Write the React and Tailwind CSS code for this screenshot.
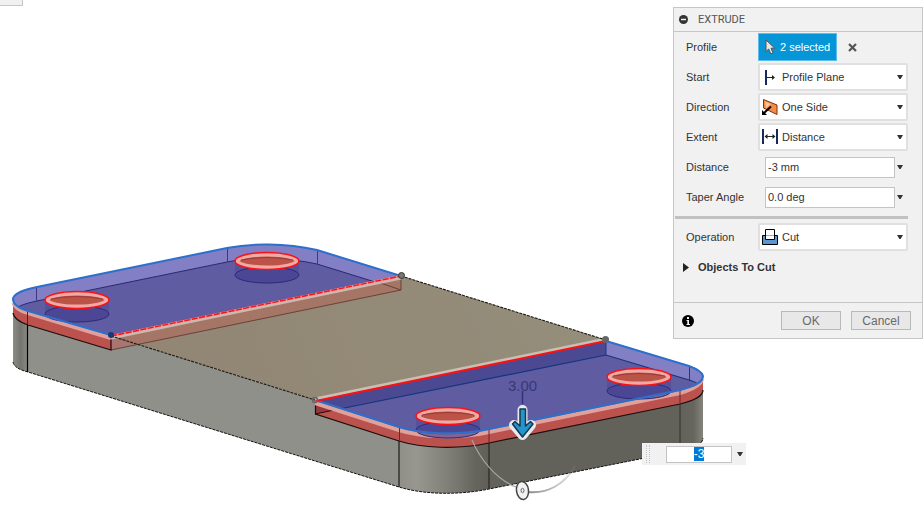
import { useEffect, useRef } from "react";

const LEFT_TOP =
  "M111 336 L28 311 C18 308 13 304 13 299 C14 293 23 290 37 287 L227 248 C251 243 285 243 317 250 L401 276 Z";
const LEFT_FLOOR =
  "M28 320 L13 313 C14 307 23 304 37 301 L227 262 C251 257 285 257 317 264 L401 290 L111 350 Z";
const RIGHT_TOP =
  "M315 400 L399 427 C421 434 457 436 489 429 L680 390 C696 386 703 382 703 376 C702 372 697 369 689 366 L606 341 Z";

function Hole({ cx, cy }) {
  return (
    <g>
      <path
        d={`M${cx - 32} ${cy} V${cy + 14} A32 8 0 0 0 ${cx + 32} ${cy + 14} V${cy} Z`}
        fill="#4a3f92"
        fillOpacity="0.4"
      />
      <ellipse cx={cx} cy={cy + 14} rx="32" ry="8" fill="#33348c" fillOpacity="0.3" stroke="#2c2a78" strokeWidth="1" />
      <ellipse cx={cx} cy={cy} rx="29.5" ry="6.500" fill="#bb5346" stroke="#f0a9a4" strokeWidth="4" />
      <path d={`M${cx - 26} ${cy - 1} Q${cx} ${cy - 6} ${cx + 26} ${cy - 1}`} fill="none" stroke="#9c3a34" strokeWidth="1" />
      <ellipse cx={cx} cy={cy} rx="32" ry="8.5" fill="none" stroke="#fb1014" strokeWidth="1.5" />
    </g>
  );
}

function Scene() {
  return (
    <svg
      viewBox="0 0 924 514"
      preserveAspectRatio="xMinYMin meet"
      className="absolute inset-0 h-full w-full"
      role="img"
      aria-label="Plate model with extrude preview"
    >
      <defs>
        <clipPath id="leftClip"><path d={LEFT_TOP} /></clipPath>
        <clipPath id="rightClip"><path d={RIGHT_TOP} /></clipPath>
        <linearGradient id="cornerLeft" x1="0" x2="1" y1="0" y2="0">
          <stop offset="0" stopColor="#8d8d86" />
          <stop offset="0.5" stopColor="#74756e" />
          <stop offset="1" stopColor="#8b8c85" />
        </linearGradient>
        <linearGradient id="cornerFront" x1="0" x2="1" y1="0" y2="0">
          <stop offset="0" stopColor="#8f8f88" />
          <stop offset="0.2" stopColor="#98978f" />
          <stop offset="0.55" stopColor="#7f7f77" />
          <stop offset="0.85" stopColor="#65655d" />
          <stop offset="1" stopColor="#606058" />
        </linearGradient>
        <linearGradient id="cornerRight" x1="0" x2="1" y1="0" y2="0">
          <stop offset="0" stopColor="#62625a" />
          <stop offset="0.6" stopColor="#66665e" />
          <stop offset="1" stopColor="#85857e" />
        </linearGradient>
        <linearGradient id="tan" x1="0" x2="1" y1="0.5" y2="0.4">
          <stop offset="0" stopColor="#928573" />
          <stop offset="1" stopColor="#948e7b" />
        </linearGradient>
        <linearGradient id="dialFade" x1="0" x2="1" y1="0" y2="0">
          <stop offset="0" stopColor="#8c8c8c" />
          <stop offset="1" stopColor="#8c8c8c" stopOpacity="0.2" />
        </linearGradient>
      </defs>

      {/* side faces */}
      <path d="M13 300 V362 C14 367 20 370 28 372 V311 Z" fill="url(#cornerLeft)" />
      <path d="M28 311 L111 336 L315 400 L399 427 V487 L28 372 Z" fill="#8e9089" />
      <path d="M399 427 C421 434 457 436 489 429 V489 C460 495 425 495 399 487 Z" fill="url(#cornerFront)" />
      <path d="M489 429 L680 390 V451 L489 489 Z" fill="#62625a" />
      <path d="M680 390 C696 386 703 382 703 376 V440 C702 445 694 449 680 451 Z" fill="url(#cornerRight)" />
      <path
        d="M13 362 C14 367 20 370 28 372 L399 487 C425 495 460 495 489 489 L680 451 C694 448 702 445 703 438"
        fill="none" stroke="#111" strokeWidth="1" strokeDasharray="3 1"
      />
      <path d="M27.5 322 V372" stroke="#000" strokeWidth="1.2" />
      <path d="M399 441 V487 M489 442 V489" stroke="#33332f" strokeWidth="1.5" />
      <path d="M680 404 V451" stroke="#33332f" strokeWidth="1" />

      {/* untouched centre of the top face */}
      <path d="M111 336 L401 276 L606 340 L315 400 Z" fill="url(#tan)" />

      {/* left pocket */}
      <path d="M111 336 L401 276 V290 L111 350 Z" fill="#a57565" />
      <path d="M111 337 L133 343 L133 345 L111 350 Z" fill="#a87672" />
      <path d="M111 350 L401 290 V276" fill="none" stroke="#6b4138" strokeWidth="1" />
      <path d="M360 276 L401 290" stroke="#6b4138" strokeWidth="1" />
      <path d="M13 300 V315 C14 319 20 322 28 325 L111 350 V336 L28 311 Z" fill="#bb524e" />
      <path d="M13 313 C14 319 20 322 28 325 L111 350 V336" fill="none" stroke="#1d0d0c" strokeWidth="1.2" />
      <path d={LEFT_TOP} fill="#827fc5" />
      <g clipPath="url(#leftClip)">
        <path d={LEFT_FLOOR} fill="#5f5ca1" stroke="#2b2873" strokeWidth="1" />
      </g>
      <path d="M36.5 287 V301 M227.5 248 V262 M317.5 250 V264" stroke="#3c3983" strokeWidth="1" />
      <path d="M13.500 303 C15 308 20 311 28 313 L111 338" fill="none" stroke="#e0a19d" strokeWidth="4" />
      <path d="M27.5 311 V324" stroke="#5c1d1d" strokeWidth="1" />
      <Hole cx={77} cy={300} />
      <Hole cx={267} cy={261} />
      <path
        d="M111 335 L28 311 C18 308 13 304 13 299 C14 293 23 290 37 287 L227 248 C251 243 285 243 317 250 L401 276"
        fill="none" stroke="#2d6fcb" strokeWidth="2"
      />
      <path d="M111 338 L401 278" stroke="#ccb8b0" strokeWidth="3" />
      <path d="M111 336 L401 276" stroke="#ff8d8d" strokeWidth="2" />
      <path d="M111 336 L401 276" stroke="#fb1014" strokeWidth="1.4" strokeDasharray="6 1.5" />

      {/* right pocket */}
      <path d="M315 400 V414 L399 441 C421 448 457 450 489 443 L680 404 C696 400 703 396 703 390 V376 L680 388 L489 427 L399 425 Z" fill="#bb524e" />
      <path d="M315 402 L339 409 L315 414 Z" fill="#96393b" />
      <path d="M315.500 402 V414 L399 441 C421 448 457 450 489 443 L680 404 C696 400 703 396 703 390" fill="none" stroke="#1d0d0c" strokeWidth="1.2" />
      <path d="M315 414 L339 409" stroke="#1d0d0c" strokeWidth="1" />
      <path d="M315 403 L399 430 C421 437 457 439 489 432 L680 393 C694 389 701 385 702 379" fill="none" stroke="#e0a19d" strokeWidth="4" />
      <path d={RIGHT_TOP} fill="#827fc5" />
      <g clipPath="url(#rightClip)">
        <path d="M315 400 L606 340 V356 L315 414 Z" fill="#4b4991" />
        <path d="M315 414 L606 355 L689 380 C698 383 703 387 703 392 L480 450 L399 441 Z" fill="#5f5ca1" />
        <path d="M315 414 L606 355 L689 380 C698 383 701 385 703 389" fill="none" stroke="#14357e" strokeWidth="1.2" />
      </g>
      <path d="M606 341 V355 M689.500 367 V381" stroke="#1d3a8a" strokeWidth="1" />
      <path d="M399.500 427 V441 M489 429 V443 M680 390 V404" stroke="#6a2726" strokeWidth="1" />
      <Hole cx={448} cy={416} />
      <Hole cx={639} cy={377} />
      <path
        d="M315 400 L399 427 C421 434 457 436 489 429 L680 390 C696 386 703 382 703 376 C702 372 697 369 689 366 L606 341"
        fill="none" stroke="#2d6fcb" strokeWidth="2"
      />
      <path d="M315 399 L606 339" stroke="#c9bfb4" strokeWidth="3" />
      <path d="M316 401 L606 341" stroke="#fb1014" strokeWidth="2" />

      {/* edges across the centre */}
      <path d="M111 336 L315 400 M401 276 L606 340" stroke="#1b1812" strokeWidth="1.1" strokeDasharray="3 1" />
      <circle cx="111" cy="335" r="3" fill="#123a7c" />
      <circle cx="401.500" cy="275.500" r="3" fill="#77776f" stroke="#333" strokeWidth="1" />
      <circle cx="605.500" cy="339.500" r="3.500" fill="#666" />
      <circle cx="315" cy="400" r="2.500" fill="none" stroke="#666" strokeWidth="1.500" />

      {/* distance manipulator */}
      <text x="508" y="391" fontSize="15" fill="#3b3776" className="font-['Liberation_Sans',Arial,sans-serif]">3.00</text>
      <path d="M522.500 391 V404" stroke="#35317a" strokeWidth="1.500" />
      <path
        d="M522.500 410 V435 M514 425 L522.500 435 L531 425"
        fill="none" stroke="#e8eaf2" strokeWidth="10" strokeLinejoin="round" strokeLinecap="round"
      />
      <path
        d="M520 409 H525.500 V426 L530.500 421.500 L533 424 L522.500 437 L512.500 424 L515 421.500 L520 426 Z"
        fill="#2494cf" stroke="#173748" strokeWidth="1.500" strokeLinejoin="round"
      />
      <path d="M472 440 C479 457 495 479 516 487" fill="none" stroke="#a3a3a3" strokeWidth="1.200" />
      <path d="M528 492 C548 494 565 484 575 466" fill="none" stroke="url(#dialFade)" strokeWidth="2" />
      <ellipse cx="522.500" cy="490.500" rx="6" ry="9" transform="rotate(-8 522.5 490.5)" fill="#f2f2f2" stroke="#444" strokeWidth="1.500" />
      <ellipse cx="522.500" cy="490.500" rx="1.500" ry="2.200" fill="none" stroke="#666" strokeWidth="1" />
    </svg>
  );
}

function Caret() {
  return (
    <svg viewBox="0 0 6 4" className="pointer-events-none h-1 w-1.5 shrink-0" aria-hidden="true">
      <path d="M0 0 H6 L3.600 4 H2.400 Z" fill="#333" />
    </svg>
  );
}

function StartIcon() {
  return (
    <svg viewBox="0 0 16 16" className="h-4 w-4" aria-hidden="true">
      <path d="M4 1 V16" stroke="#15295a" strokeWidth="2" />
      <path d="M5 8.500 H12" stroke="#222" strokeWidth="1" />
      <path d="M10 6 L13 8.500 L10 11 Z" fill="#222" />
    </svg>
  );
}

function DirectionIcon() {
  return (
    <svg viewBox="0 0 16 16" className="h-4 w-4" aria-hidden="true">
      <path d="M1.500 0.500 L15 6 V15.500 L1.500 9 Z" fill="#f58b45" stroke="#7b3512" strokeWidth="1" />
      <path d="M3 2.500 L9 5 L4 9 Z" fill="#fbc39a" />
      <path d="M2 14 L9 7.500" stroke="#000" strokeWidth="2" />
      <path d="M0 16 V11 L5 16 Z" fill="#000" />
    </svg>
  );
}

function ExtentIcon() {
  return (
    <svg viewBox="0 0 16 16" className="h-4 w-4" aria-hidden="true">
      <path d="M1 0 V15 M15 0 V15" stroke="#15295a" strokeWidth="2" />
      <path d="M3 7.500 H13" stroke="#222" strokeWidth="1" />
      <path d="M5.500 5 L2.500 7.500 L5.500 10 Z M10.500 5 L13.500 7.500 L10.500 10 Z" fill="#222" />
    </svg>
  );
}

function CutIcon() {
  return (
    <svg viewBox="0 0 16 16" className="h-4 w-4" aria-hidden="true">
      <path d="M0.500 6.500 H15.500 V15.500 H0.500 Z" fill="#5a97d2" stroke="#000" strokeWidth="1" />
      <path d="M3.500 0.500 H12.500 V10.500 H3.500 Z" fill="#fff" stroke="#000" strokeWidth="1" />
      <path d="M4 6.500 H12" stroke="#aaa" strokeWidth="1" />
    </svg>
  );
}

function Row({ id, label, children }) {
  return (
    <div className="flex h-[30px] items-center pr-3.5 pl-3">
      <label htmlFor={id} className="w-[72px] shrink-0">{label}</label>
      {children}
    </div>
  );
}

function SelectRow({ id, label, options, icon }) {
  return (
    <Row id={id} label={label}>
      <div className="relative h-7 flex-1">
        <select
          id={id}
          className="h-full w-full appearance-none rounded-[2px] border-2 border-[#e0e0e0] bg-white pl-[22px] outline-none"
        >
          {options.map((option) => (
            <option key={option}>{option}</option>
          ))}
        </select>
        <span className="pointer-events-none absolute inset-y-0 left-1 flex items-center">{icon}</span>
        <span className="pointer-events-none absolute inset-y-0 right-[5px] flex items-center"><Caret /></span>
      </div>
    </Row>
  );
}

function ValueRow({ id, label, value }) {
  return (
    <Row id={id} label={label}>
      <div className="flex min-w-0 flex-1 items-center pr-[5px] pl-[7px]">
        <input
          id={id}
          type="text"
          defaultValue={value}
          className="mr-0.5 h-[21px] min-w-0 flex-1 border border-[#c4c4c4] bg-white px-0.5 outline-none"
        />
        <Caret />
      </div>
    </Row>
  );
}

function ExtrudePanel() {
  return (
    <section className="relative mt-[7px] mr-px w-[250px] border border-[#c6c6c6] bg-[#f1f1f1] font-['Liberation_Sans',Arial,sans-serif] text-[11px] leading-4 text-[#333]">
      <header className="flex h-6 items-center gap-2.5 border-b border-[#c6c6c6] pl-[5px]">
        <button type="button" aria-label="Collapse">
          <svg viewBox="0 0 9 9" className="h-[9px] w-[9px]" aria-hidden="true">
            <circle cx="4.500" cy="4.500" r="4.500" fill="#333" />
            <path d="M2 4.500 H7" stroke="#f1f1f1" strokeWidth="1.500" />
          </svg>
        </button>
        <h2 className="font-['Roboto',Arial,sans-serif] text-[#555]">EXTRUDE</h2>
      </header>

      <Row id="profile" label="Profile">
        <button
          id="profile"
          type="button"
          className="flex h-7 w-[79px] items-center gap-1 border border-[#5cbcec] bg-[#0696d7] pl-1.5 whitespace-nowrap text-white"
        >
          <svg viewBox="0 0 11 16" className="h-4 w-[11px] shrink-0" aria-hidden="true">
            <path d="M1 1 V12.500 L3.700 10 L5.800 14.800 L8 13.800 L6 9.200 H9.800 Z" fill="#e4e6e8" stroke="#555" strokeWidth="1" />
          </svg>
          2 selected
        </button>
        <button type="button" aria-label="Clear selection" className="ml-[11px]">
          <svg viewBox="0 0 9 9" className="h-[9px] w-[9px]" aria-hidden="true">
            <path d="M1 1 L8 8 M8 1 L1 8" stroke="#555" strokeWidth="2.200" />
          </svg>
        </button>
      </Row>
      <SelectRow id="start" label="Start" options={["Profile Plane", "Offset Plane", "Object"]} icon={<StartIcon />} />
      <SelectRow id="direction" label="Direction" options={["One Side", "Two Sides", "Symmetric"]} icon={<DirectionIcon />} />
      <SelectRow id="extent" label="Extent" options={["Distance", "To Object", "All"]} icon={<ExtentIcon />} />
      <ValueRow id="distance" label="Distance" value="-3 mm" />
      <ValueRow id="taper" label="Taper Angle" value="0.0 deg" />
      <hr className="mt-1 mr-3.5 mb-[3px] ml-px h-[3px] border-0 bg-[#c1c1c1]" />
      <SelectRow id="operation" label="Operation" options={["Cut", "Join", "Intersect"]} icon={<CutIcon />} />
      <button type="button" aria-expanded="false" className="flex h-[30px] items-center gap-[9px] pl-[9px] font-bold">
        <svg viewBox="0 0 6 9" className="h-[9px] w-1.5" aria-hidden="true">
          <path d="M0 0 L6 4.500 L0 9 Z" fill="#222" />
        </svg>
        Objects To Cut
      </button>

      <footer className="mt-5 flex h-9 items-center gap-2.5 border-t border-[#c6c6c6] pr-[11px] pl-2 text-xs text-[#6a6a6a]">
        <button type="button" aria-label="Help" className="mr-auto">
          <svg viewBox="0 0 12 12" className="h-3 w-3" aria-hidden="true">
            <circle cx="6" cy="6" r="6" fill="#000" />
            <path d="M5 2 H7 V4 H5 Z M4.500 5 H7 V9 H8 V10 H4.500 V9 H5.300 V6 H4.500 Z" fill="#f1f1f1" />
          </svg>
        </button>
        <button type="button" className="h-[19px] w-[60px] border border-[#b9b9b9] bg-[#e8e8e8]">OK</button>
        <button type="button" className="h-[19px] w-[60px] border border-[#b9b9b9] bg-[#e8e8e8]">Cancel</button>
      </footer>
    </section>
  );
}

function FloatingValue() {
  const ref = useRef(null);
  useEffect(() => {
    ref.current.focus();
    ref.current.select();
  }, []);
  return (
    <div className="absolute top-[443px] left-[642px] flex h-[22px] w-[104px] items-center bg-[#f1f1f1] pr-[3px] pl-1">
      <span className="mr-4 h-[18px] w-1 border-x border-dotted border-[#c4c4c4]" />
      <input
        ref={ref}
        type="text"
        aria-label="Extrude distance"
        defaultValue="-3"
        className="mr-[5px] h-[17px] min-w-0 flex-1 border border-[#c4c4c4] bg-white text-center font-['Liberation_Sans',Arial,sans-serif] text-xs leading-[15px] text-[#333] outline-none selection:bg-[#0078d7] selection:text-white"
      />
      <Caret />
    </div>
  );
}

export default function App() {
  return (
    <main className="relative flex min-h-screen items-start justify-end overflow-hidden bg-white">
      <Scene />
      <div className="absolute top-0 left-0 h-1.5 w-[23px] border-r border-b border-[#c6c6c6] bg-[#f1f1f1]" />
      <FloatingValue />
      <ExtrudePanel />
    </main>
  );
}
